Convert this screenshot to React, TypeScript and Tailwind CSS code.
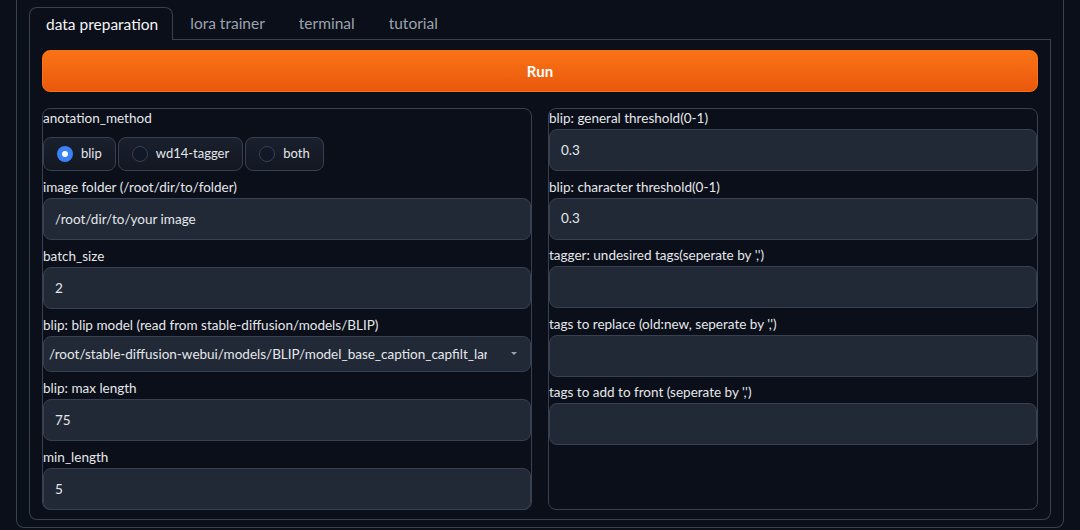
import React from "react";

const labelCls = "h-5 leading-5 text-[13.5px] text-[#e5e7eb] whitespace-nowrap";
const boxCls =
  "mt-px h-[42px] flex items-center px-[11px] rounded-lg border border-[#374151] bg-[#212936] text-[13.5px] text-[#e5e7eb]";

const Field = ({ label, value }: { label: string; value?: string }) => (
  <div className="flex flex-col">
    <div className={labelCls}>{label}</div>
    <div className={boxCls}>{value}</div>
  </div>
);

const Radio = ({ label, checked }: { label: string; checked?: boolean }) => (
  <div className="h-[34px] flex items-center gap-2 pl-[13px] pr-[13px] rounded-lg border border-[#374151] bg-linear-to-b from-[#1a202c] to-[#121722] text-[13px] text-[#e5e7eb]">
    {checked ? (
      <span className="w-4 h-4 rounded-full bg-[#3b82f6] flex items-center justify-center">
        <span className="w-[6px] h-[6px] rounded-full bg-white" />
      </span>
    ) : (
      <span className="w-4 h-4 rounded-full border border-[#374151] bg-[#111827]" />
    )}
    <span>{label}</span>
  </div>
);

const tabs = ["lora trainer", "terminal", "tutorial"];

export default function App() {
  return (
    <div className="w-[1080px] h-[530px] bg-[#0b0f19] font-['Lato','Liberation_Sans',sans-serif] overflow-hidden">
      <div className="mx-4 border-x border-b border-[#374151] rounded-b-lg px-3 pt-[7px] pb-[7px]">
        <div className="flex h-[33px]">
          <div className="pl-4 pr-[14px] pt-[2px] flex items-center border-t border-x border-[#374151] rounded-t-lg text-[15.5px] text-[#f3f4f6]">
            data preparation
          </div>
          {tabs.map((t) => (
            <div key={t} className="px-[17px] pt-[2px] flex items-center border-b border-[#374151] text-[15.5px] text-[#9ca3af]">
              {t}
            </div>
          ))}
          <div className="flex-1 border-b border-[#374151]" />
        </div>
        <div className="border-x border-b border-[#374151] rounded-b-lg px-3 pt-[10px] pb-[9px]">
          <button className="w-full h-[42px] rounded-lg border border-[#f97316] bg-linear-to-b from-[#f97316] to-[#ea580c] text-white font-bold text-[15px]">
            Run
          </button>
          <div className="mt-4 grid grid-cols-2 gap-4">
            <div className="h-[402px] border border-[#374151] rounded-lg">
              <div className="-mt-px flex flex-col gap-[6px]">
                <div className="flex flex-col">
                  <div className={labelCls}>anotation_method</div>
                  <div className="mt-[9px] flex gap-[2px]">
                    <Radio label="blip" checked />
                    <Radio label="wd14-tagger" />
                    <Radio label="both" />
                  </div>
                </div>
                <Field label="image folder (/root/dir/to/folder)" value="/root/dir/to/your image" />
                <Field label="batch_size" value="2" />
                <div className="flex flex-col">
                  <div className={labelCls}>blip: blip model (read from stable-diffusion/models/BLIP)</div>
                  <div className="mt-px h-[36px] flex items-center pl-[5px] pr-3 rounded-lg border border-[#374151] bg-[#212936] text-[13.5px] text-[#e5e7eb]">
                    <span className="w-[438px] overflow-hidden whitespace-nowrap">
                      /root/stable-diffusion-webui/models/BLIP/model_base_caption_capfilt_large.pth
                    </span>
                    <span className="ml-auto mr-[1px]">
                      <svg width="6" height="4" viewBox="0 0 6 4">
                        <polygon points="0,0 6,0 3,3" fill="#9ca3af" />
                      </svg>
                    </span>
                  </div>
                </div>
                <Field label="blip: max length" value="75" />
                <Field label="min_length" value="5" />
              </div>
            </div>
            <div className="h-[402px] border border-[#374151] rounded-lg">
              <div className="-mt-px flex flex-col gap-[5.5px]">
                <Field label="blip: general threshold(0-1)" value="0.3" />
                <Field label="blip: character threshold(0-1)" value="0.3" />
                <Field label="tagger: undesired tags(seperate by ',')" />
                <Field label="tags to replace (old:new, seperate by ',')" />
                <Field label="tags to add to front (seperate by ',')" />
              </div>
            </div>
          </div>
        </div>
      </div>
    </div>
  );
}
